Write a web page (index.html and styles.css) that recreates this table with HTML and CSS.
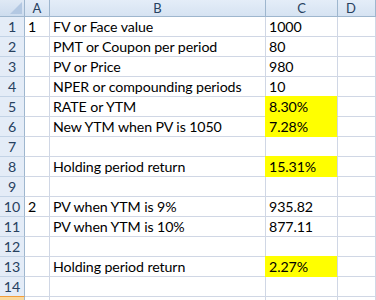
FILE: index.html
```html
<!DOCTYPE html>
<html>
<head>
<meta charset="utf-8">
<link rel="stylesheet" href="styles.css">
</head>
<body>
<div class="sheet">
  <div class="corner"><span class="tri"></span></div>
  <div class="ch">A</div>
  <div class="ch">B</div>
  <div class="ch">C</div>
  <div class="ch last">D</div>

  <div class="rh">1</div><div class="c">1</div><div class="c">FV or Face value</div><div class="c">1000</div><div class="c"></div>
  <div class="rh">2</div><div class="c"></div><div class="c">PMT or Coupon per period</div><div class="c">80</div><div class="c"></div>
  <div class="rh">3</div><div class="c"></div><div class="c">PV or Price</div><div class="c">980</div><div class="c"></div>
  <div class="rh">4</div><div class="c"></div><div class="c">NPER or compounding periods</div><div class="c">10</div><div class="c"></div>
  <div class="rh">5</div><div class="c"></div><div class="c">RATE or YTM</div><div class="c hl hl-top">8.30%</div><div class="c"></div>
  <div class="rh">6</div><div class="c"></div><div class="c">New YTM when PV is 1050</div><div class="c hl">7.28%</div><div class="c"></div>
  <div class="rh">7</div><div class="c"></div><div class="c"></div><div class="c"></div><div class="c"></div>
  <div class="rh">8</div><div class="c"></div><div class="c">Holding period return</div><div class="c hl hl-top">15.31%</div><div class="c"></div>
  <div class="rh">9</div><div class="c"></div><div class="c"></div><div class="c"></div><div class="c"></div>
  <div class="rh">10</div><div class="c">2</div><div class="c">PV when YTM is 9%</div><div class="c">935.82</div><div class="c"></div>
  <div class="rh">11</div><div class="c"></div><div class="c">PV when YTM is 10%</div><div class="c">877.11</div><div class="c"></div>
  <div class="rh">12</div><div class="c"></div><div class="c"></div><div class="c"></div><div class="c"></div>
  <div class="rh">13</div><div class="c"></div><div class="c">Holding period return</div><div class="c hl hl-top">2.27%</div><div class="c"></div>
  <div class="rh">14</div><div class="c"></div><div class="c"></div><div class="c"></div><div class="c"></div>
  <div class="rh sel"></div><div class="c"></div><div class="c"></div><div class="c"></div><div class="c"></div>
</div>
</body>
</html>
```
FILE: styles.css
```css
html, body {
  margin: 0;
  padding: 0;
  background: #ffffff;
  overflow: hidden;
}
.sheet {
  display: grid;
  grid-template-columns: 25px 25px 216px 72px 1fr;
  grid-template-rows: 17px repeat(15, 20px);
  width: 376px;
  height: 300px;
  overflow: hidden;
  font-family: Lato, "Open Sans", sans-serif;
  font-size: 14.2px;
  letter-spacing: -0.1px;
  color: #000000;
}
.sheet > div {
  box-sizing: border-box;
  border-right: 1px solid #d0d7e5;
  border-bottom: 1px solid #d0d7e5;
  display: flex;
  align-items: flex-end;
  white-space: nowrap;
  line-height: 17px;
}
.corner {
  position: relative;
  background: linear-gradient(#dfe9f5, #cddcee);
  border-right-color: #9eb6ce !important;
  border-bottom-color: #9eb6ce !important;
}
.tri {
  position: absolute;
  right: 2px;
  bottom: 2px;
  width: 0;
  height: 0;
  border-left: 12px solid transparent;
  border-bottom: 12px solid #b3c8e2;
}
.ch {
  background: linear-gradient(#e4edf8, #d6e3f2);
  border-right-color: #9eb6ce !important;
  border-bottom-color: #9eb6ce !important;
  justify-content: center;
  align-items: center !important;
  font-size: 13px;
  letter-spacing: 0;
  color: #27415f;
}
.ch.last {
  justify-content: flex-start;
  padding-left: 8px;
}
.rh {
  background: #e4ecf7;
  border-right-color: #9eb6ce !important;
  border-bottom-color: #c3d3e6 !important;
  justify-content: center;
  color: #27415f;
  padding-bottom: 1px;
}
.rh.sel {
  background: #f9d99f;
  border-top: 1px solid #f29d3a;
  margin-top: -1px;
}
.c {
  padding-left: 3px;
  padding-bottom: 1px;
}
.hl {
  background: #ffff00;
  margin-left: -1px;
  padding-left: 4px;
  border-bottom-color: #ffff00 !important;
}
.hl-top {
  margin-top: -1px;
  padding-top: 1px;
}
```
